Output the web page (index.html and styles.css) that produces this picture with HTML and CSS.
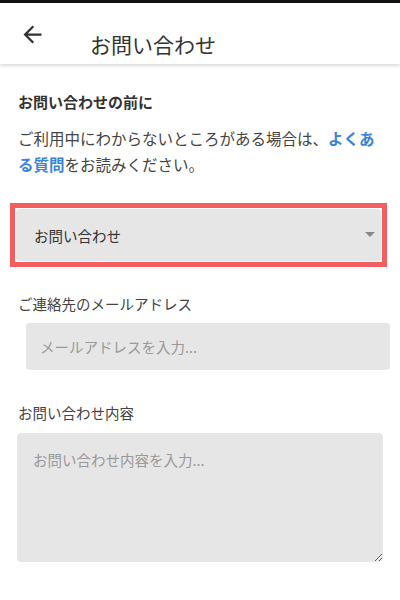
FILE: index.html
```html
<!DOCTYPE html>
<html lang="ja">
<head>
    <meta charset="UTF-8">
    <meta name="viewport" content="width=device-width, initial-scale=1.0">
    <title>お問い合わせ</title>
    <link rel="stylesheet" href="styles.css">
</head>
<body>

    <!-- App bar -->
    <header class="appbar">
        <svg class="back" viewBox="0 0 24 24" width="27" height="27" aria-hidden="true">
            <path d="M20 11H7.83l5.59-5.59L12 4l-8 8 8 8 1.41-1.41L7.83 13H20v-2z"/>
        </svg>
        <h1 class="title">お問い合わせ</h1>
    </header>

    <main class="content">
        <h2 class="lead">お問い合わせの前に</h2>
        <p class="intro">ご利用中にわからないところがある場合は、<a href="#" class="faq">よくある質問</a>をお読みください。</p>

        <!-- Category select (highlighted) -->
        <div class="highlight">
            <div class="select-wrap">
                <select class="select">
                    <option>お問い合わせ</option>
                </select>
                <span class="caret"></span>
            </div>
        </div>

        <label class="label" for="email">ご連絡先のメールアドレス</label>
        <input class="input" id="email" type="email" placeholder="メールアドレスを入力...">

        <label class="label label-body" for="body">お問い合わせ内容</label>
        <textarea class="textarea" id="body" placeholder="お問い合わせ内容を入力..."></textarea>
    </main>

</body>
</html>
```

FILE: styles.css
```css
/* General */
body {
    margin: 0;
    background: #fff;
    color: #333;
    font-family: "Noto Sans CJK JP", "Noto Sans", sans-serif;
}

/* App bar */
.appbar {
    display: flex;
    align-items: flex-start;
    height: 61px;
    border-top: 3px solid #111;
    padding-left: 19px;
    box-shadow: 0 2px 3px rgba(0, 0, 0, 0.14);
}

.back {
    margin-top: 18px;
    fill: #333;
}

.title {
    margin: 26px 0 0 44px;
    font-size: 21px;
    line-height: 30px;
    font-weight: normal;
    color: #333;
}

/* Content */
.content {
    padding: 0 18px;
}

.lead {
    margin: 27px 0 0;
    font-size: 15px;
    line-height: 22px;
    font-weight: bold;
}

.intro {
    margin: 12px 0 0;
    font-size: 15.5px;
    line-height: 26px;
    color: #444;
}

.faq {
    color: #3a84d8;
    font-weight: bold;
    text-decoration: none;
}

/* Select */
.highlight {
    margin: 26px -5px 0 -8px;
    border: 5px solid #f35f60;
    padding: 1px;
}

.select-wrap {
    position: relative;
}

.select {
    display: block;
    width: 100%;
    height: 52px;
    margin: 0;
    padding: 0 18px;
    border: none;
    border-radius: 4px;
    background: #e6e6e6;
    color: #333;
    font-family: inherit;
    font-size: 14.5px;
    -webkit-appearance: none;
    appearance: none;
}

.caret {
    position: absolute;
    right: 6px;
    top: 23px;
    width: 0;
    height: 0;
    border-left: 5px solid transparent;
    border-right: 5px solid transparent;
    border-top: 5px solid #888;
}

/* Fields */
.label {
    display: block;
    margin-top: 26px;
    font-size: 14.5px;
    line-height: 22px;
    color: #444;
}

.label-body {
    margin-top: 32px;
}

.input,
.textarea {
    display: block;
    box-sizing: border-box;
    border: none;
    border-radius: 4px;
    background: #e6e6e6;
    color: #333;
    font-family: inherit;
    font-size: 14.5px;
    outline: none;
}

.input::placeholder,
.textarea::placeholder {
    color: #999;
}

.input {
    width: 100%;
    height: 47px;
    margin: 8px -8px 0 8px;
    padding: 0 14px;
}

.textarea {
    width: calc(100% + 2px);
    height: 129px;
    margin: 9px -1px 0 -1px;
    padding: 16px 16px;
    line-height: 22px;
    resize: vertical;
}
```
